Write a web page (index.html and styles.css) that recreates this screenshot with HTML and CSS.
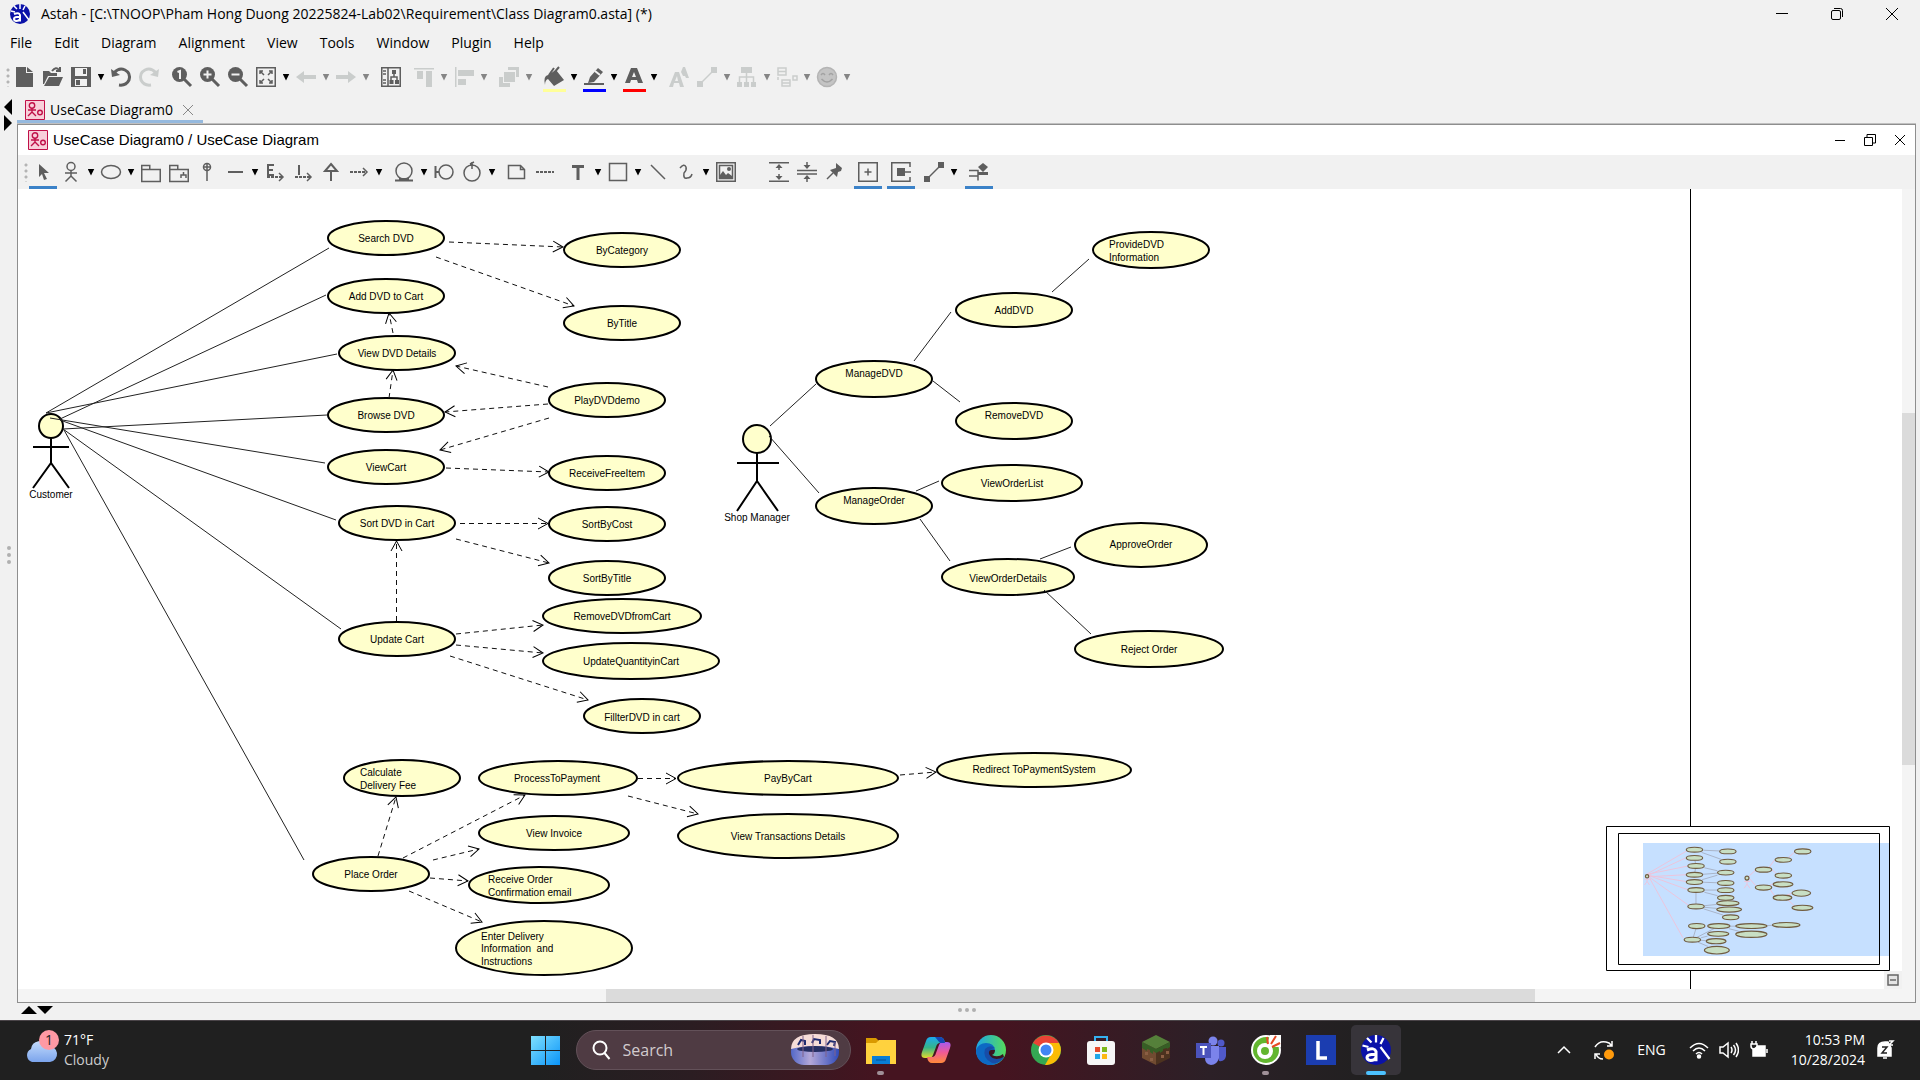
FILE: index.html
```html
<!DOCTYPE html>
<html lang="en">
<head>
<meta charset="utf-8">
<title>Astah - Class Diagram0.asta</title>
<link rel="stylesheet" href="styles.css">
</head>
<body>
<svg class="defs" aria-hidden="true">
  <symbol id="logo" viewBox="0 0 20 20"><ellipse cx="10" cy="10" rx="10" ry="10" fill="#0b12a8"/><path d="M10 0v5M4 2l3 3M15 2l-2 4M1 7l4 1M13 8l6 8" stroke="#fff" stroke-width="1.5"/><path d="M4 10q5-2 6 1v6.500M10 13H7q-3 .3-3 2t2.500 2q2.500 0 3.500-2" fill="none" stroke="#fff" stroke-width="2"/></symbol>
  <symbol id="usecase" viewBox="0 0 20 20"><path d="M.5.5h19v19H.5z" fill="#f8d0da" stroke="#c01048"/><g fill="none" stroke="#c01048" stroke-width="1.400"><circle cx="7" cy="5.500" r="2.700"/><path d="M7 8v4M3 10h8M3 16l4-4 4 4"/><circle cx="15" cy="12.500" r="2.300"/></g></symbol>
</svg>
<header class="titlebar">
  <svg class="i20"><use href="#logo"/></svg>
  <h1>Astah - [C:\TNOOP\Pham Hong Duong 20225824-Lab02\Requirement\Class Diagram0.asta] (*)</h1>
  <div class="winctl">
    <button aria-label="Minimize"><svg class="i14" viewBox="0 0 14 14"><path d="M1 6.500h12"/></svg></button>
    <button aria-label="Restore"><svg class="i14" viewBox="0 0 14 14"><rect x="1.500" y="3.500" width="9" height="9" rx="1.500"/><path d="M4 1.500h6.500a2 2 0 0 1 2 2V10"/></svg></button>
    <button aria-label="Close"><svg class="i14" viewBox="0 0 14 14"><path d="M1 1l12 12M13 1L1 13"/></svg></button>
  </div>
</header>
<nav class="menu">
  <button>File</button><button>Edit</button><button>Diagram</button><button>Alignment</button><button>View</button><button>Tools</button><button>Window</button><button>Plugin</button><button>Help</button>
</nav>
<div class="toolbar" role="toolbar" aria-label="Main">
  <i class="grip"></i>
  <button class="t" aria-label="New"><svg viewBox="0 0 20 20"><path class="f" d="M1 0h10v6h7v14H1zM12 0l6 5h-6z"/></svg></button>
  <button class="t" aria-label="Open"><svg viewBox="0 0 20 20"><path class="f" d="M0 4h6l2 2h6v3H5L1 17H0zM6 10h14l-4 9H1z"/><path d="M9 4q4-5 7-1M17 0v4h-4" class="w2"/></svg></button>
  <button class="t" aria-label="Save"><svg viewBox="0 0 20 20"><path class="f" fill-rule="evenodd" d="M0 0h20v20H0zM4 1v8h12V1zM4 12v7h12v-7zM12 2h3v5h-3zM5 13h4v5H5z"/></svg></button>
  <button class="d" aria-label="Save options"></button>
  <button class="t" aria-label="Undo"><svg viewBox="0 0 20 20"><path class="w3" d="M3 6q5-6 11-3t4 10q-3 6-10 5"/><path class="f" d="M0 2l1 8 8-2z"/></svg></button>
  <button class="t off" aria-label="Redo"><svg viewBox="0 0 20 20"><path class="w3" d="M17 6Q12 0 6 3T2 13q3 6 10 5"/><path class="f" d="M20 2l-1 8-8-2z"/></svg></button>
  <button class="t g" aria-label="Zoom 100%"><svg viewBox="0 0 20 20"><circle class="f" cx="7.500" cy="7.500" r="7.500"/><path d="M12 12l7 7" class="w3"/><path class="wh" d="M5.500 5l2.500-1v8"/></svg></button>
  <button class="t" aria-label="Zoom in"><svg viewBox="0 0 20 20"><circle class="f" cx="7.500" cy="7.500" r="7.500"/><path d="M12 12l7 7" class="w3"/><path class="wh" d="M3.500 7.500h8M7.500 3.500v8"/></svg></button>
  <button class="t" aria-label="Zoom out"><svg viewBox="0 0 20 20"><circle class="f" cx="7.500" cy="7.500" r="7.500"/><path d="M12 12l7 7" class="w3"/><path class="wh" d="M3.500 7.500h8"/></svg></button>
  <button class="t" aria-label="Fit"><svg viewBox="0 0 20 20"><path d="M.75.75h18.500v18.500H.75z"/><path d="M4 7V4h3M4 4l4 4M13 4h3v3M16 4l-4 4M4 13v3h3M4 16l4-4M16 13v3h-3M16 16l-4-4"/></svg></button>
  <button class="d" aria-label="Fit options"></button>
  <button class="t off" aria-label="Back"><svg viewBox="0 0 20 20"><path class="f" d="M0 10l8-6v4h12v4H8v4z"/></svg></button>
  <button class="d off" aria-label="Back list"></button>
  <button class="t off" aria-label="Forward"><svg viewBox="0 0 20 20"><path class="f" d="M20 10l-8-6v4H0v4h12v4z"/></svg></button>
  <button class="d off" aria-label="Forward list"></button>
  <button class="t g" aria-label="Structure"><svg viewBox="0 0 20 20"><path d="M.75.75h18.500v18.500H.75zM7 1v18M2 4h3M2 7h3M2 13h3M2 16h3M13 6v4M10 14v-4h6v4"/><path class="f" d="M11 3h4v4h-4zM8.500 13h4v4h-4zM14 13h4v4h-4z"/></svg></button>
  <button class="t g off" aria-label="Align top"><svg viewBox="0 0 20 20"><path class="f" d="M0 1h20v1.500H0zM3 4h6v8H3zM12 4h6v16h-6z"/></svg></button>
  <button class="d off" aria-label="Vertical alignment"></button>
  <button class="t off" aria-label="Align left"><svg viewBox="0 0 20 20"><path class="f" d="M1 0h1.500v20H1zM4 3h16v6H4zM4 12h8v6H4z"/></svg></button>
  <button class="d off" aria-label="Horizontal alignment"></button>
  <button class="t g off" aria-label="Order"><svg viewBox="0 0 20 20"><path class="f" d="M9 0h11v10h-3V3H9zM5 5h11v10H5zM0 10h4v6h7v4H0z"/></svg></button>
  <button class="d off" aria-label="Order options"></button>
  <button class="t g ul yellow" aria-label="Fill color"><svg viewBox="0 0 20 20"><path class="f" d="M4 8l8-5 8 10-10 6-6-7Q1 13 1 18-1 9 4 8z"/><path class="w2" d="M5 8l5-7M9 7l6-7"/></svg></button>
  <button class="d" aria-label="Fill color options"></button>
  <button class="t ul blue" aria-label="Line color"><svg viewBox="0 0 20 20"><path class="f" d="M14 1l5 4L10 15l-6 1 2-6zM0 16h20v2H0z"/><path class="wh" d="M11 4l5 4"/></svg></button>
  <button class="d" aria-label="Line color options"></button>
  <button class="t ul red" aria-label="Font color"><svg viewBox="0 0 20 20"><path class="f" fill-rule="evenodd" d="M7 1h6l6 15h-5l-1-3H7l-1 3H1zM10 5l-2 5h4z"/></svg></button>
  <button class="d" aria-label="Font color options"></button>
  <button class="t g off" aria-label="Font"><svg viewBox="0 0 20 20"><path class="f" fill-rule="evenodd" d="M6 5h4l5 15h-4l-1-4H5l-1 4H0zM8 9l-2 5h3zM14 0h2l4 11h-3l-1-2h-2l-2-4z"/></svg></button>
  <button class="t off" aria-label="Line style"><svg viewBox="0 0 20 20"><path class="f" d="M14 0h6v6h-6zM0 14h6v6H0z"/><path d="M3 17L17 3"/></svg></button>
  <button class="d off" aria-label="Line style options"></button>
  <button class="t off" aria-label="Tree layout"><svg viewBox="0 0 20 20"><path class="f" d="M4 0h11v6H4zM0 15h5v5H0zM7 15h5v5H7zM14 15h5v5h-5z"/><path d="M9.500 5v10M2.500 15v-5h14v5"/></svg></button>
  <button class="d off" aria-label="Tree options"></button>
  <button class="t off" aria-label="Layout"><svg viewBox="0 0 20 20"><path d="M1 1h8v7H1zM1 4.500h8M5 13h8v6H5zM5 16h8M16 9h4v4h-4zM1 10v3"/></svg></button>
  <button class="d off" aria-label="Layout options"></button>
  <button class="t off" aria-label="Stereotype icon"><svg viewBox="0 0 20 20"><circle cx="10" cy="10" r="9.500" fill="#c4c4c4" stroke="#b4b4b4"/><path d="M4 8q2-3 4 0M12 8q2-3 4 0M4.500 12q5.500 6 11 0" stroke="#a2a2a2"/></svg></button>
  <button class="d off" aria-label="Icon options"></button>
</div>
<div class="workspace">
  <aside class="rail">
    <svg class="rail-arrows" viewBox="0 0 17 36"><path d="M12 5v16L4 13zM4 21v16l8-8z"/></svg>
    <div class="dots vert"><i></i><i></i><i></i></div>
  </aside>
  <main>
    <div class="tabs"><div class="tab"><svg class="i20"><use href="#usecase"/></svg><a href="#canvas">UseCase Diagram0</a><button aria-label="Close tab"><svg class="i12" viewBox="0 0 12 12"><path d="M1 1l10 10M11 1L1 11"/></svg></button></div></div>
    <section class="frame">
      <header class="frame-title"><svg class="i20"><use href="#usecase"/></svg><h2>UseCase Diagram0 / UseCase Diagram</h2>
        <div class="framectl">
          <button aria-label="Minimize diagram"><svg class="i12" viewBox="0 0 12 12"><path d="M1 6.500h10"/></svg></button>
          <button aria-label="Restore diagram"><svg class="i12" viewBox="0 0 12 12"><path d="M.5 3.500h8v8h-8zM3 3V.5h8.500V9H9"/></svg></button>
          <button aria-label="Close diagram"><svg class="i12" viewBox="0 0 12 12"><path d="M1 1l10 10M11 1L1 11"/></svg></button>
        </div>
      </header>
      <div class="toolbar" role="toolbar" aria-label="Diagram elements">
        <i class="grip"></i>
        <button class="t on" aria-label="Select"><svg viewBox="0 0 20 20"><path class="f" d="M6 2l10 9h-5l3 6-3 1-2-6-3 3z"/></svg></button>
        <button class="t" aria-label="Actor"><svg viewBox="0 0 20 20"><circle cx="10" cy="4.500" r="4" /><path d="M10 8.500V14M4 11h12M4.500 19.500L10 14l5.500 5.500"/></svg></button>
        <button class="d" aria-label="Actor options"></button>
        <button class="t" aria-label="Use case"><svg viewBox="0 0 20 20"><ellipse cx="10" cy="10" rx="9.500" ry="6.500"/></svg></button>
        <button class="d" aria-label="Use case options"></button>
        <button class="t" aria-label="Package"><svg viewBox="0 0 20 20"><path d="M.75 3.500h8v4h10.500v12H.75zM.75 7.500h8"/></svg></button>
        <button class="t" aria-label="Subsystem"><svg viewBox="0 0 20 20"><path d="M.75 3.500h8v4h10.500v12H.75zM.75 7.500h8M12 16v-3h5v3M14.500 13v-3"/></svg></button>
        <button class="t" aria-label="Containment"><svg viewBox="0 0 20 20"><circle cx="10" cy="5" r="3.500"/><path d="M10 1v18M6 5h8"/></svg></button>
        <button class="t" aria-label="Association"><svg viewBox="0 0 20 20"><path class="f" d="M3 9h15v2H3z"/></svg></button>
        <button class="d" aria-label="Association options"></button>
        <button class="t" aria-label="Extend"><svg viewBox="0 0 20 20"><path class="w2" d="M9 3H3v10h6M3 8h5"/><path class="dash" d="M2 15h15"/><path d="M14 11l4 4-4 4"/></svg></button>
        <button class="t" aria-label="Include"><svg viewBox="0 0 20 20"><path class="w2" d="M6 3v10"/><path class="dash" d="M2 15h15"/><path d="M14 11l4 4-4 4"/></svg></button>
        <button class="t" aria-label="Generalization"><svg viewBox="0 0 20 20"><path class="w2" d="M10 2l6 7H4zM10 9v10"/></svg></button>
        <button class="t" aria-label="Dependency"><svg viewBox="0 0 20 20"><path class="dash" d="M1 10h15"/><path d="M14 6l4 4-4 4"/></svg></button>
        <button class="d" aria-label="Dependency options"></button>
        <button class="t g" aria-label="Entity"><svg viewBox="0 0 20 20"><circle cx="10" cy="9" r="8"/><path class="w2" d="M1 18.500h18M5 17h10"/></svg></button>
        <button class="d" aria-label="Entity options"></button>
        <button class="t" aria-label="Boundary"><svg viewBox="0 0 20 20"><circle cx="12" cy="10" r="7"/><path class="w2" d="M1.500 4v12M1 10h4"/></svg></button>
        <button class="t" aria-label="Control"><svg viewBox="0 0 20 20"><circle cx="10" cy="11" r="8"/><path d="M8 3h3M10 0v7M8 2l4-2"/></svg></button>
        <button class="d" aria-label="Control options"></button>
        <button class="t g" aria-label="Note"><svg viewBox="0 0 20 20"><path d="M1.500 3.500h12l4 4v9h-16zM13.500 3.500v4h4"/></svg></button>
        <button class="t" aria-label="Note anchor"><svg viewBox="0 0 20 20"><path class="dash" d="M1 10h18"/></svg></button>
        <button class="t g" aria-label="Text"><svg viewBox="0 0 20 20"><path class="f" d="M4 3h12v3h-4.500v12h-3V6H4z"/></svg></button>
        <button class="d" aria-label="Text options"></button>
        <button class="t" aria-label="Rectangle"><svg viewBox="0 0 20 20"><path d="M1.500 1.500h17v17h-17z"/></svg></button>
        <button class="d" aria-label="Shape options"></button>
        <button class="t" aria-label="Line"><svg viewBox="0 0 20 20"><path d="M3 3l14 14"/></svg></button>
        <button class="t" aria-label="Freehand"><svg viewBox="0 0 20 20"><path d="M4 6q4-5 6-1 1 3-2 6-1 6 3 5 4 0 5-4"/></svg></button>
        <button class="d" aria-label="Freehand options"></button>
        <button class="t" aria-label="Image"><svg viewBox="0 0 20 20"><path d="M.75.75h18.500v18.500H.75zM3.500 3.500h13v13h-13z"/><path class="f" d="M4 16v-3l3-4 3 4 2-2 4 3v2z"/><circle class="f" cx="13" cy="7" r="2"/></svg></button>
        <button class="t wide" aria-label="Spread"><svg viewBox="0 0 20 20"><path d="M0 .75h20M0 19.250h20M10 3v5M10 12v5"/><path class="f" d="M6.500 6L10 2l3.500 4zM6.500 14l3.500 4 3.500-4z"/></svg></button>
        <button class="t" aria-label="Compress"><svg viewBox="0 0 20 20"><path d="M0 8.500h20M0 12h20M10 0v6M10 14v6"/><path class="f" d="M6.500 3L10 7l3.500-4zM6.500 17l3.500-4 3.500 4z"/></svg></button>
        <button class="t" aria-label="Pin"><svg viewBox="0 0 20 20"><path class="f" d="M11 1l6 5-1 3-3 1-1 5-7-7 6-2z"/><path d="M8 11l-6 6"/></svg></button>
        <button class="t g on" aria-label="Auto resize"><svg viewBox="0 0 20 20"><path d="M.75.75h18.500v18.500H.75zM10 6.500v7M6.500 10h7"/></svg></button>
        <button class="t g on" aria-label="Snap"><svg viewBox="0 0 20 20"><path d="M19 5V.75H.75v18.500H19V15M10 10h10"/><path class="f" d="M6 6h8v8H6z"/></svg></button>
        <button class="t g" aria-label="Connector"><svg viewBox="0 0 20 20"><path class="f" d="M14 0h6v6h-6zM0 14h6v6H0z"/><path d="M3 17L17 3"/></svg></button>
        <button class="d" aria-label="Connector options"></button>
        <button class="t g on" aria-label="Align guide"><svg viewBox="0 0 20 20"><path d="M0 8.500h9v10M0 14h9"/><path class="f" d="M14 1l5 4-5 5-5-5zM9 10h10v3H9z"/></svg></button>
      </div>
      <div class="view">
        <div class="canvas" id="canvas">
          <svg class="diagram" aria-label="Use case diagram">
            <defs>
              <marker id="open" markerUnits="userSpaceOnUse" markerWidth="14" markerHeight="14" refX="11" refY="7" orient="auto"><path d="M1 1.500L11 7 1 12.500" fill="none" stroke="#000"/></marker>
            </defs>
            <g transform="translate(-17 -189)">
              <path d="M1689.500 189v2000" stroke="#000"/>
              <g class="nodes"><g id="nodes">
                <ellipse cx="385" cy="238" rx="58" ry="17"/><ellipse cx="621" cy="250" rx="58" ry="17"/><ellipse cx="621" cy="323" rx="58" ry="17"/>
                <ellipse cx="385" cy="296" rx="58" ry="17"/><ellipse cx="396" cy="353" rx="58" ry="17"/><ellipse cx="606" cy="400" rx="58" ry="17"/>
                <ellipse cx="385" cy="415" rx="58" ry="17"/><ellipse cx="385" cy="467" rx="58" ry="17"/><ellipse cx="606" cy="473" rx="58" ry="17"/>
                <ellipse cx="396" cy="523" rx="58" ry="17"/><ellipse cx="606" cy="524" rx="58" ry="17"/><ellipse cx="606" cy="578" rx="58" ry="17"/>
                <ellipse cx="621" cy="616" rx="79" ry="17"/><ellipse cx="396" cy="639" rx="58" ry="17"/><ellipse cx="630" cy="661" rx="88" ry="18"/>
                <ellipse cx="641" cy="716" rx="58" ry="17"/><ellipse cx="401" cy="778" rx="58" ry="18"/><ellipse cx="557" cy="778" rx="79" ry="17"/>
                <ellipse cx="553" cy="833" rx="75" ry="17"/><ellipse cx="370" cy="874" rx="58" ry="17"/><ellipse cx="538" cy="885" rx="70" ry="18"/>
                <ellipse cx="543" cy="948" rx="88" ry="27"/><ellipse cx="787" cy="778" rx="110" ry="17"/><ellipse cx="787" cy="836" rx="110" ry="22"/>
                <ellipse cx="1033" cy="770" rx="97" ry="17"/><ellipse cx="1150" cy="250" rx="58" ry="18"/><ellipse cx="1013" cy="310" rx="58" ry="17"/>
                <ellipse cx="873" cy="379" rx="58" ry="18"/><ellipse cx="1013" cy="421" rx="58" ry="18"/><ellipse cx="1011" cy="483" rx="70" ry="18"/>
                <ellipse cx="873" cy="506" rx="58" ry="18"/><ellipse cx="1007" cy="577" rx="66" ry="18"/><ellipse cx="1140" cy="545" rx="66" ry="22"/>
                <ellipse cx="1148" cy="649" rx="74" ry="18"/><ellipse cx="50" cy="426" rx="12" ry="12"/><ellipse cx="756" cy="439" rx="14" ry="14"/>
              </g></g>
              <g class="figures"><path id="figures" d="M50 438v25M32 447h36M32 488l18-25 18 25M756 453v28M736 463h42M736 511l20-30 21 30"/></g>
              <g class="links"><path id="links" d="M45 413L328 248M59 419L325 295M45 413L336 354M62 429L326 415M49 418L324 463M59 420L335 520M62 429L340 629M63 430L303 860M769 426L815 384M768 436L818 493M913 361L950 312M932 381L959 402M1051 292L1088 259M915 491L938 481M919 519L949 561M1039 559L1070 547M1043 590L1090 634"/></g>
              <g class="deps"><g id="deps">
                <path d="M448 242L562 247"/><path d="M435 257L573 306"/><path d="M392 333L388 313"/><path d="M388 398L392 370"/><path d="M547 387L455 366"/><path d="M547 404L444 412"/><path d="M548 418L439 450"/><path d="M445 468L548 472"/><path d="M459 523.500H547"/><path d="M455 539L548 563"/><path d="M395.500 621V541"/><path d="M455 634L542 625"/><path d="M455 645L542 653"/><path d="M449 656L587 700"/><path d="M637 778.500H675"/><path d="M627 796L697 814"/><path d="M899 775L935 772"/><path d="M377 856L395 797"/><path d="M402 858L524 795"/><path d="M432 860L478 849"/><path d="M429 878L467 881"/><path d="M408 891L481 922"/>
              </g></g>
              <g class="labels">
                <text x="385" y="242">Search DVD</text><text x="621" y="254">ByCategory</text><text x="621" y="327">ByTitle</text><text x="385" y="300">Add DVD to Cart</text><text x="396" y="357">View DVD Details</text><text x="606" y="404">PlayDVDdemo</text><text x="385" y="419">Browse DVD</text><text x="385" y="471">ViewCart</text><text x="606" y="477">ReceiveFreeItem</text><text x="396" y="527">Sort DVD in Cart</text><text x="606" y="528">SortByCost</text><text x="606" y="582">SortByTitle</text><text x="621" y="620">RemoveDVDfromCart</text><text x="396" y="643">Update Cart</text><text x="630" y="665">UpdateQuantityinCart</text><text x="641" y="721">FillterDVD in cart</text><text x="556" y="782">ProcessToPayment</text><text x="553" y="837">View Invoice</text><text x="370" y="878">Place Order</text><text x="787" y="782">PayByCart</text><text x="787" y="840">View Transactions Details</text><text x="1033" y="773">Redirect ToPaymentSystem</text><text x="1013" y="314">AddDVD</text><text x="873" y="377">ManageDVD</text><text x="1013" y="419">RemoveDVD</text><text x="1011" y="487">ViewOrderList</text><text x="873" y="504">ManageOrder</text><text x="1007" y="582">ViewOrderDetails</text><text x="1140" y="548">ApproveOrder</text><text x="1148" y="653">Reject Order</text><text x="756" y="521">Shop Manager</text><text x="50" y="498">Customer</text>
              </g>
              <g class="labels left">
                <text><tspan x="359" y="776">Calculate</tspan><tspan x="359" y="789">Delivery Fee</tspan></text>
                <text><tspan x="487" y="883">Receive Order</tspan><tspan x="487" y="896">Confirmation email</tspan></text>
                <text xml:space="preserve"><tspan x="480" y="940">Enter Delivery</tspan><tspan x="480" y="952">Information  and</tspan><tspan x="480" y="965">Instructions</tspan></text>
                <text><tspan x="1108" y="248">ProvideDVD</tspan><tspan x="1108" y="261">Information</tspan></text>
              </g>
            </g>
          </svg>
          <svg class="minimap" viewBox="0 0 284 145" aria-label="Overview">
            <path d="M0 0h284v145H0z" fill="#fff" stroke="none"/>
            <path d="M37 17h246v113H37z" fill="#c6e0ff" stroke="none"/>
            <g transform="translate(34 -10) scale(.1415)"><use href="#links" class="mini-links"/><use href="#deps" class="mini-deps"/><use href="#figures" class="mini-links"/><use href="#nodes" class="mini-nodes"/></g>
            <path d="M.5.500h283v144H.5zM12.500 7.500h261v131h-261z" fill="none" stroke="#000"/>
          </svg>
          <button class="collapse" aria-label="Hide overview"><svg class="i12" viewBox="0 0 12 12"><path d="M1 1h10v10H1z" fill="#e4e4e4" stroke="#666" stroke-width="1.500"/><path d="M3 6h6" stroke="#888" stroke-width="2"/></svg></button>
        </div>
        <div class="vscroll"><i></i></div>
        <div class="hscroll"><i></i></div>
      </div>
    </section>
  </main>
</div>
<footer class="splitbar">
  <svg class="split-arrows" viewBox="0 0 32 8"><path d="M0 8L8 0l8 8zM16 0h16l-8 8z"/></svg>
  <div class="dots"><i></i><i></i><i></i></div>
</footer>
<footer class="taskbar">
  <button class="weather">
    <svg viewBox="0 0 34 40"><defs><linearGradient id="cl" x2="0" y2="1"><stop stop-color="#c4dcfc"/><stop offset="1" stop-color="#7ba4ec"/></linearGradient></defs><path d="M7 32a7 7 0 0 1-1-13 9 9 0 0 1 17-3 8 8 0 0 1 2 16z" fill="url(#cl)"/><circle cx="24" cy="10" r="10" fill="#ff99a4"/><text x="24" y="15">1</text></svg>
    <span><b>71°F</b><em>Cloudy</em></span>
  </button>
  <div class="apps">
    <button class="app" aria-label="Start"><svg viewBox="0 0 30 30"><defs><linearGradient id="wn" x2="1" y2="1"><stop stop-color="#7fe0ff"/><stop offset="1" stop-color="#0a94f8"/></linearGradient></defs><path fill="url(#wn)" d="M0 1h14v14H0zM15 1h14v14H15zM0 16h14v14H0zM15 16h14v14H15z"/></svg></button>
    <label class="search"><svg class="i20" viewBox="0 0 20 20"><circle cx="9" cy="8" r="6.500"/><path d="M13.500 13l5 6"/></svg><input type="search" placeholder="Search" aria-label="Search">
      <svg class="carousel" viewBox="0 0 50 32"><defs><linearGradient id="ca"><stop stop-color="#5368c8"/><stop offset=".4" stop-color="#b4a8d8"/><stop offset="1" stop-color="#314cba"/></linearGradient></defs><rect x="1" y="4" width="48" height="27" rx="13" fill="url(#ca)"/><path d="M1 15Q1 0 25 0t24 15q-11-3-24-3T1 15z" fill="#f5dcd7"/><ellipse cx="25" cy="15" rx="18" ry="3" fill="#252e62"/><path d="M8 11l3-5 4 1v4M22 9l2-4 6 1v4M37 11l3-4 5 1-1 4" stroke="#202c70" stroke-width="2" fill="none"/><path d="M13 2v21M23 1v22M36 2v21M45 8v14" stroke="#80638b"/></svg></label>
    <button class="app run" aria-label="File Explorer"><svg viewBox="0 0 30 30"><path d="M0 3h10l4 4v4H0z" fill="#d99a00"/><path d="M0 8h10l3-3h17v24H0z" fill="#ffd23e"/><path d="M6 21h18v8H6z" fill="#087ed6"/><path d="M10 25h10" stroke="#064f92"/></svg></button>
    <button class="app" aria-label="Copilot"><svg viewBox="0 0 30 30"><defs><linearGradient id="c1" x2="0" y2="1"><stop stop-color="#1caaf0"/><stop offset=".5" stop-color="#35b48a"/><stop offset="1" stop-color="#e3da2b"/></linearGradient><linearGradient id="c2" x2="0" y2="1"><stop stop-color="#a65af0"/><stop offset=".5" stop-color="#f05a96"/><stop offset="1" stop-color="#ff8b39"/></linearGradient></defs><path d="M10 2h9q4 0 5 6h-5q-3 0-4 4l-3 8q-1 3-4 3H4q-5 0-3-6L5 6q1-4 5-4z" fill="url(#c1)"/><path d="M20 28h-9q-4 0-5-6h5q3 0 4-4l3-8q1-3 4-3h4q5 0 3 6l-4 11q-1 4-5 4z" fill="url(#c2)"/><path d="M14 2h5q4 0 5 6h-5z" fill="#1547b4"/></svg></button>
    <button class="app" aria-label="Edge"><svg viewBox="0 0 30 30"><defs><linearGradient id="ed"><stop stop-color="#1da4e8"/><stop offset="1" stop-color="#55dc5b"/></linearGradient></defs><circle cx="15" cy="15" r="15" fill="url(#ed)"/><path d="M0 15Q3 8 10 8q8 0 9 7-8 0-5 6 5 5 14 1-6 9-16 8Q0 27 0 15z" fill="#0d69c4"/><path d="M9 14q-3 9 7 14 8 1 12-6-11 4-14-3-2-5 5-6-5-4-10 1z" fill="#174da8"/><path d="M19 15q0 4-3 5 6 3 11-1l1 3q-11 5-15-3-1-5 6-4z" fill="#3b1521"/></svg></button>
    <button class="app" aria-label="Chrome"><svg viewBox="0 0 30 30"><circle cx="15" cy="15" r="15" fill="#34a853"/><path d="M15 15L2 8a15 15 0 0 1 26 0z" fill="#ea4335"/><path d="M15 8h13a15 15 0 0 1-14 22l8-14z" fill="#fbbc05"/><circle cx="15" cy="15" r="7.500" fill="#fff"/><circle cx="15" cy="15" r="5.500" fill="#4285f4"/></svg></button>
    <button class="app" aria-label="Microsoft Store"><svg viewBox="0 0 30 30"><path d="M9 7V2h12v5" fill="none" stroke="#35b0ef" stroke-width="2"/><rect x="1" y="6" width="28" height="24" rx="3" fill="#f6f6f6"/><path d="M9 12h5v5H9z" fill="#e5492b"/><path d="M16 12h5v5h-5z" fill="#7db81c"/><path d="M9 19h5v5H9z" fill="#1ea6e8"/><path d="M16 19h5v5h-5z" fill="#fdb813"/></svg></button>
    <button class="app" aria-label="Minecraft"><svg viewBox="0 0 30 30"><path d="M1 7v16l14 7V14z" fill="#714b31"/><path d="M29 7v16l-14 7V14z" fill="#4c321f"/><path d="M15 0l14 7-14 7L1 7z" fill="#55803a"/><path d="M1 7l14 7v4l-3-2v3l-3-2v-2l-3-1v2l-5-3zM29 7l-14 7v4l4-2v2l3-2v-2l4-1v1l3-2z" fill="#365f25"/><path d="M4 17h3v3H4zM9 23h3v3H9zM20 20h3v3h-3zM25 16h3v3h-3z" fill="#8a5e43"/></svg></button>
    <button class="app" aria-label="Teams"><svg viewBox="0 0 30 30"><circle cx="17" cy="6" r="4.500" fill="#7b83eb"/><circle cx="25" cy="8" r="3.500" fill="#5059c9"/><path d="M20 12h10v9q-1 6-7 5z" fill="#5059c9"/><path d="M9 11h14v12q-2 7-8 7-6-1-6-7z" fill="#7b83eb"/><path d="M0 8h15v15H0z" fill="#4b53bc"/><path d="M4 12h7M7.500 12v8" stroke="#fff" stroke-width="2"/></svg></button>
    <button class="app run" aria-label="Coc Coc"><svg viewBox="0 0 30 30"><circle cx="15" cy="15" r="14" fill="#63b62f" stroke="#fff" stroke-width="2"/><circle cx="14" cy="16" r="6" fill="none" stroke="#fff" stroke-width="4"/><path d="M15 12L19 0h11v12z" fill="#fff"/><path d="M17 9l-1-7M20 9l5-8M21 12l8-4" stroke="#e84b25" stroke-width="2"/></svg></button>
    <button class="app" aria-label="L"><svg viewBox="0 0 30 30"><path d="M0 0h30v30H0z" fill="#1b3db0"/><path d="M12 6v17h9" fill="none" stroke="#fff" stroke-width="3.500"/></svg></button>
    <button class="app active" aria-label="Astah"><svg viewBox="0 0 20 20"><use href="#logo"/></svg></button>
  </div>
  <div class="tray">
    <button aria-label="Show hidden icons"><svg class="i14" viewBox="0 0 14 14"><path d="M1 10l6-6 6 6"/></svg></button>
    <button class="sync" aria-label="Update"><svg class="i20" viewBox="0 0 20 20"><path d="M1 7q5-8 14-4l3 3M18 1v5h-5M9 19q-5 0-7-5M1 19v-5h5"/><circle cx="15" cy="14.500" r="5" fill="#ff9a0c" stroke="none"/></svg></button>
    <button class="lang">ENG</button>
    <button class="sys" aria-label="Network, volume, battery">
      <svg class="i20" viewBox="0 0 20 20"><path d="M1 8q9-9 18 0M4 11q6-6 12 0M7 14q3-3 6 0"/><circle cx="10" cy="16.500" r="1.500" fill="#fff"/></svg>
      <svg class="i20" viewBox="0 0 20 20"><path d="M1 7h3l5-4v14l-5-4H1zM12 7q2 3 0 6M14.500 5q4 5 0 10M17 3q5 7 0 14"/></svg>
      <svg class="i20" viewBox="0 0 20 20"><path d="M4 9v7h12V6H8" fill="#fff"/><path d="M18 9v4M3 1v3M7 1v3M2 4h6v2q0 3-3 3T2 6zM5 9v7"/></svg>
    </button>
    <button class="clock"><span>10:53 PM</span><span>10/28/2024</span></button>
    <button aria-label="Notifications"><svg class="i20" viewBox="0 0 20 20"><path d="M3 16V8q0-6 7-6h3l3 6v8zM8 18h4" fill="#fff"/><path d="M7 7h5l-5 6h5" stroke="#222"/><path d="M14 1h4l-4 4h4"/></svg></button>
  </div>
</footer>
</body>
</html>
```
FILE: styles.css
```css
* { box-sizing: border-box; }
body {
  margin: 0;
  min-height: 100vh;
  display: flex;
  flex-direction: column;
  background: #f1f1f1;
  color: #000;
  font: 14px/20px "Open Sans", "Noto Sans", sans-serif;
  overflow-x: hidden;
}
button {
  margin: 0;
  padding: 0;
  border: 0;
  background: none;
  color: inherit;
  font: inherit;
}
svg { display: block; fill: none; stroke: currentColor; }
h1, h2 { margin: 0; font-size: inherit; font-weight: 400; white-space: nowrap; }
.defs { position: absolute; width: 0; height: 0; }
.defs symbol { stroke: none; }
.i12 { width: 12px; height: 12px; }
.i14 { width: 14px; height: 14px; }
.i20 { width: 20px; height: 20px; flex: none; }

.titlebar { display: flex; align-items: center; height: 28px; padding-left: 10px; gap: 11px; }
.titlebar .i20 { stroke: none; }
.titlebar h1 { font-size: 14px; }
.winctl { margin-left: auto; margin-right: 1px; display: flex; }
.winctl button { width: 55px; display: grid; place-items: center; }
.menu { display: flex; gap: 22px; height: 32px; padding: 0 0 2px 10px; align-items: center; }

.toolbar { display: flex; align-items: center; height: 34px; padding-left: 5px; background: #f1f1f1; color: #5e5e5e; }
.grip { width: 6px; height: 20px; background: radial-gradient(circle at 3px 3px, #b4b4b4 1px, transparent 2px) 0 0 / 6px 6px; }
.t { width: 28px; height: 34px; flex: none; display: grid; place-items: center; border: solid transparent; border-width: 3px 0; }
.t svg { width: 20px; height: 20px; stroke-width: 1.5; overflow: visible; }
.t .w2 { stroke-width: 2; }
.t .w3 { stroke-width: 3; }
.t .f { fill: currentColor; stroke: none; }
.t .wh { stroke: #f1f1f1; stroke-width: 2; }
.dash { stroke-width: 2; stroke-dasharray: 3 1; }
.g { margin-left: 5px; }
.wide { margin-left: 25px; }
.on { border-bottom-color: #3b82c8; }
.off { color: #cacdcc; }
.ul::after { content: ""; width: 23px; height: 3px; margin-top: -3px; background: currentColor; }
.ul { border-width: 4px 0 0; }
.yellow::after { background: #ffff99; }
.blue::after { background: #0000ff; }
.red::after { background: #ff0000; }
.d { width: 12px; height: 20px; flex: none; display: grid; place-items: center; color: #000; }
.d::before { content: ""; width: 7px; height: 7px; background: currentColor; clip-path: polygon(0 0, 100% 0, 50% 100%); }
.d.off { color: #858585; }

.workspace { flex: 1; display: grid; grid-template-columns: 17px minmax(0, 1fr); padding-right: 4px; }
.rail { display: flex; flex-direction: column; padding-bottom: 24px; }
.rail-arrows { width: 17px; height: 36px; fill: #000; stroke: none; overflow: visible; }
.dots { display: flex; gap: 3px; margin: auto; }
.dots i { width: 4px; height: 4px; border-radius: 50%; background: #b0b0b0; }
.dots.vert { flex-direction: column; }
main { display: flex; flex-direction: column; min-width: 0; }
.tabs { display: flex; height: 30px; border-bottom: 1px solid #c0c0c0; }
.tab { display: flex; align-items: center; gap: 5px; width: 186px; padding: 5px 9px 0 8px; border-bottom: 3px solid #95b9de; }
.tab .i20 { stroke: none; }
.tab a { color: inherit; text-decoration: none; white-space: nowrap; flex: 1; }
.tab button { color: #888; }
.frame { flex: 1; display: flex; flex-direction: column; border: 1px solid #8e8e8e; }
.frame-title { display: flex; align-items: center; gap: 5px; height: 30px; padding: 0 9px 0 10px; background: #fff; font: 15px/20px "Liberation Sans", Arial, sans-serif; }
.frame-title .i20 { stroke: none; }
.framectl { margin-left: auto; display: flex; gap: 18px; }
.view { flex: 1; display: grid; grid-template: minmax(800px, 1fr) 13px / minmax(0, 1fr) 13px; background: #f4f4f4; }
.canvas { position: relative; overflow: hidden; background: #fff; }
.diagram { position: absolute; inset: 0; width: 100%; height: 100%; }
.nodes { fill: #ffffcc; stroke: #000; stroke-width: 2; }
.figures { stroke-width: 2; }
.links { stroke: #222; }
.deps { stroke: #111; stroke-dasharray: 5 4; marker-end: url(#open); }
.labels { fill: #000; stroke: none; text-anchor: middle; font: 10px "Liberation Sans", Arial, sans-serif; }
.labels.left { text-anchor: start; }
.minimap { position: absolute; right: 12px; bottom: 18px; width: 284px; height: 145px; }
.mini-nodes { fill: #c8dfc4; stroke: #705c40; stroke-width: 8; }
.mini-links { stroke: #ecc4dc; stroke-width: 7; }
.mini-deps { stroke: #a9b4c8; stroke-width: 7; }
.collapse { position: absolute; right: 0; bottom: 0; width: 18px; height: 18px; display: grid; place-items: center; background: #f1f1f1; }
.vscroll { display: grid; grid-template-rows: 28fr 44fr 28fr; }
.vscroll i { grid-row: 2; background: #dbdbdb; }
.hscroll { grid-row: 2; display: grid; grid-template-columns: 588fr 929fr 367fr; }
.hscroll i { grid-column: 2; background: #dbdbdb; }

.splitbar { display: grid; grid-template-columns: 1fr auto 1fr; align-items: center; height: 17px; padding: 0 8px 4px 21px; }
.split-arrows { width: 32px; height: 8px; fill: #000; stroke: none; }

.taskbar {
  display: grid;
  grid-template-columns: 1fr auto 1fr;
  align-items: center;
  height: 60px;
  padding-bottom: 2px;
  border-top: 1px solid #4a4448;
  color: #fff;
  background: linear-gradient(90deg, #202020 0 28%, #2b1d22 36%, #451420 46%, #451420 52%, #2c2027 63%, #202020 72%);
}
.weather { display: flex; align-items: center; gap: 5px; padding-left: 25px; text-align: left; }
.weather svg { width: 34px; height: 40px; stroke: none; }
.weather text { fill: #222; font-size: 14px; text-anchor: middle; }
.weather b, .weather em { display: block; font-weight: 400; font-style: normal; }
.weather em { color: #ccc; }
.apps { display: flex; align-items: center; gap: 5px; padding-left: 1px; }
.app { position: relative; width: 50px; height: 50px; display: grid; place-items: center; border-radius: 5px; }
.app svg { width: 30px; height: 30px; stroke: none; }
.run::after, .active::after { content: ""; position: absolute; bottom: 0; width: 7px; height: 4px; border-radius: 2px; background: #a09098; }
.active { background: #37343a; }
.active::after { width: 20px; background: #4cc2ff; }
.search { display: flex; align-items: center; gap: 12px; width: 275px; height: 40px; padding: 0 10px 0 14px; border: 1px solid #635159; border-radius: 20px; background: #4f3b43; }
.search input { flex: 1; min-width: 0; border: 0; padding: 0; outline: 0; background: none; color: #fff; font: 16px/20px "Open Sans", sans-serif; }
.search input::placeholder { color: #d2cbce; opacity: 1; }
.search .i20 { stroke-width: 2; }
.search .carousel { width: 50px; height: 32px; stroke: none; }
.tray { display: flex; justify-content: flex-end; align-items: center; padding-right: 25px; }
.tray svg { stroke-width: 1.5; }
.sync { margin-left: 23px; }
.lang { margin-left: 23px; }
.sys { display: flex; gap: 10px; margin-left: 23px; }
.clock { display: grid; margin-left: 22px; margin-right: 10px; text-align: right; }
```
